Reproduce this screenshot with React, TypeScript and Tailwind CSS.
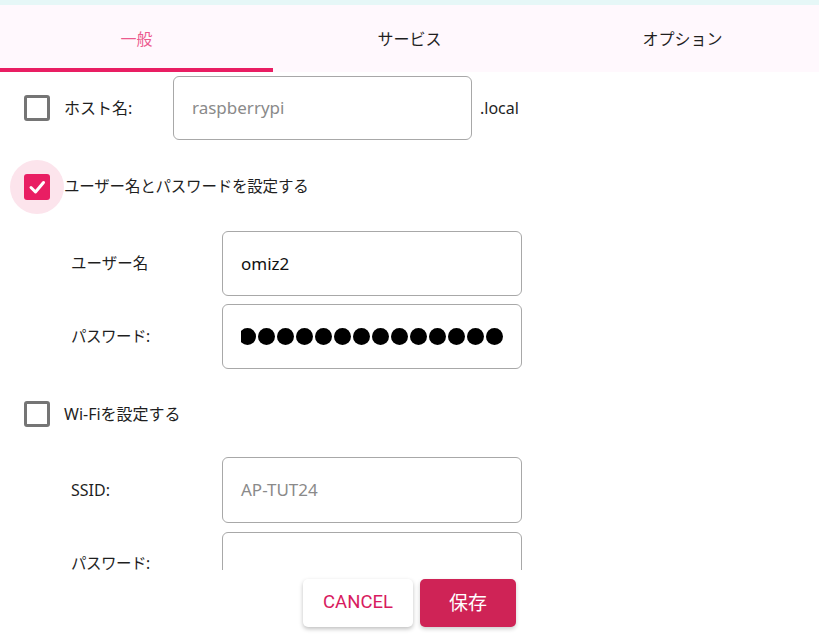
import React from "react";

const FONT = { fontFamily: '"Noto Sans", "Noto Sans CJK JP", sans-serif' };

function Box({ checked }: { checked?: boolean }) {
  if (checked) {
    return (
      <div className="relative w-[26px] h-[26px] shrink-0">
        <div className="absolute left-[-14px] top-[-14px] w-[54px] h-[54px] rounded-full bg-[#fce4ec]" />
        <div className="relative w-[26px] h-[26px] rounded-[3px] bg-[#e91e63] flex items-center justify-center">
          <svg width="20" height="20" viewBox="0 0 20 20">
            <polyline points="4,10.5 8.5,15 16.5,5.5" fill="none" stroke="white" strokeWidth="3" strokeLinecap="round" strokeLinejoin="round" />
          </svg>
        </div>
      </div>
    );
  }
  return <div className="w-[26px] h-[26px] shrink-0 rounded-[3px] border-[3px] border-[#757575] bg-white" />;
}

function Input({ children, h, w, className = "" }: { children?: React.ReactNode; h: string; w?: string; className?: string }) {
  return (
    <div
      className={`${h} ${w ?? "w-[300px]"} shrink-0 rounded-[6px] border border-[#a8a8a8] bg-white flex items-center px-[18px] text-[17px] ${className}`}
    >
      {children}
    </div>
  );
}

export default function App() {
  const dots = Array.from({ length: 15 });
  return (
    <div className="w-[819px] h-[635px] flex flex-col bg-white text-[#1f1f1f] overflow-hidden" style={FONT}>
      <div className="h-[5px] shrink-0 bg-[#e6f7f7]" />
      <div className="h-[67px] shrink-0 bg-[#fff8fd] grid grid-cols-3 text-[16px]">
        <div className="flex items-center justify-center text-[#ec5a8e] border-b-[4px] border-[#e91e63] pt-[4px]">一般</div>
        <div className="flex items-center justify-center">サービス</div>
        <div className="flex items-center justify-center">オプション</div>
      </div>
      <div className="h-[498px] shrink-0 overflow-hidden flex flex-col">
        <div className="flex shrink-0 items-center pt-[4px] pl-[24px]">
          <Box />
          <span className="ml-[14px] w-[109px] text-[16px]">ホスト名:</span>
          <Input h="h-[64px]" w="w-[299px]" className="text-[#8a8a8a]">raspberrypi</Input>
          <span className="ml-[8px] text-[16px]">.local</span>
        </div>
        <div className="flex shrink-0 items-center h-[52px] mt-[21px] pl-[24px]">
          <Box checked />
          <span className="ml-[14px] text-[15.5px] tracking-[-0.2px]">ユーザー名とパスワードを設定する</span>
        </div>
        <div className="flex shrink-0 items-center mt-[18px] pl-[71px]">
          <span className="w-[151px] text-[15.5px]">ユーザー名</span>
          <Input h="h-[65px]" className="text-[#111]">omiz2</Input>
        </div>
        <div className="flex shrink-0 items-center mt-[8px] pl-[71px]">
          <span className="w-[151px] text-[15.5px] tracking-[-0.5px]">パスワード:</span>
          <Input h="h-[65px]">
            <div className="w-[263px] overflow-hidden flex justify-end gap-[2px]">
              {dots.map((_, i) => (
                <div key={i} className="w-[17px] h-[17px] shrink-0 rounded-full bg-black" />
              ))}
            </div>
          </Input>
        </div>
        <div className="flex shrink-0 items-center h-[52px] mt-[19px] pl-[24px]">
          <Box />
          <span className="ml-[14px] text-[16px]">Wi-Fiを設定する</span>
        </div>
        <div className="flex shrink-0 items-center mt-[17px] pl-[71px]">
          <span className="w-[151px] text-[16px]">SSID:</span>
          <Input h="h-[66px]" className="text-[#8a8a8a]">AP-TUT24</Input>
        </div>
        <div className="flex shrink-0 items-start mt-[9px] pl-[71px]">
          <span className="w-[151px] text-[15.5px] tracking-[-0.5px] mt-[20px]">パスワード:</span>
          <Input h="h-[65px]" />
        </div>
      </div>
      <div className="flex-1 flex justify-center items-start pt-[9px] gap-[7px]">
        <button
          className="w-[110px] h-[48px] rounded-[5px] bg-white text-[#d81b60] text-[18.5px] shadow-[0_2px_4px_rgba(0,0,0,0.25)]"
          style={{ fontFamily: 'Roboto, "Noto Sans", sans-serif' }}
        >
          CANCEL
        </button>
        <button className="w-[96px] h-[48px] rounded-[5px] bg-[#cf2356] text-white text-[19px] shadow-[0_2px_4px_rgba(0,0,0,0.2)]">
          保存
        </button>
      </div>
    </div>
  );
}
